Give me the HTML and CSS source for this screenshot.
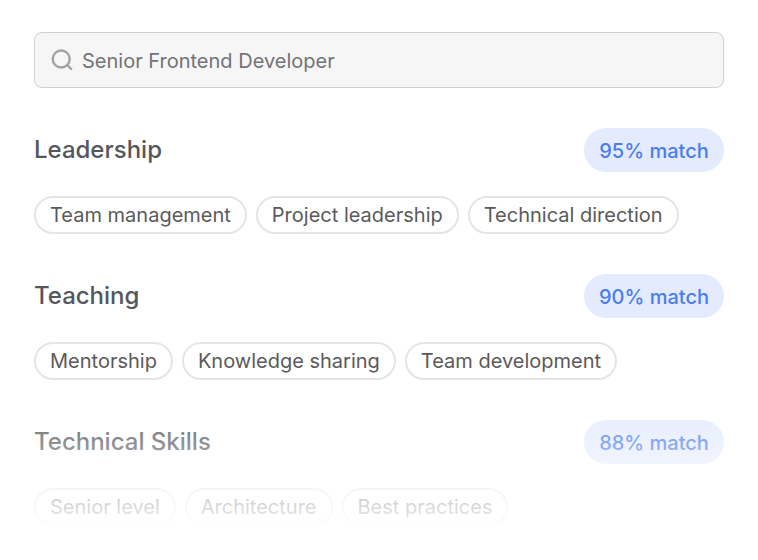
FILE: index.html
```html
<!DOCTYPE html>
<html lang="en">
<head>
<meta charset="utf-8">
<meta name="viewport" content="width=device-width, initial-scale=1">
<title>Skill match</title>
<link rel="stylesheet" href="styles.css">
</head>
<body>
<main class="panel">
  <label class="search">
    <svg class="search-icon" viewBox="0 0 24 24" aria-hidden="true"><circle cx="11.2" cy="11" r="8.5"/><path d="M17.4 17.2 21.2 21"/></svg>
    <input class="search-input" type="text" aria-label="Role" value="Senior Frontend Developer">
  </label>
  <section class="skill">
    <header class="skill-head"><h2 class="skill-title">Leadership</h2><span class="match">95% match</span></header>
    <ul class="tags"><li class="tag">Team management</li><li class="tag">Project leadership</li><li class="tag">Technical direction</li></ul>
  </section>
  <section class="skill">
    <header class="skill-head"><h2 class="skill-title">Teaching</h2><span class="match">90% match</span></header>
    <ul class="tags"><li class="tag">Mentorship</li><li class="tag">Knowledge sharing</li><li class="tag">Team development</li></ul>
  </section>
  <section class="skill">
    <header class="skill-head"><h2 class="skill-title">Technical Skills</h2><span class="match">88% match</span></header>
    <ul class="tags"><li class="tag">Senior level</li><li class="tag">Architecture</li><li class="tag">Best practices</li></ul>
  </section>
  <div class="fade"></div>
</main>
</body>
</html>
```
FILE: styles.css
```css
* { box-sizing: border-box; }
body { margin: 0; background: #fff; color: #55575c; font-family: Inter, "Liberation Sans", sans-serif; }
.panel { position: relative; padding: 32px 34px; display: flex; flex-direction: column; gap: 40px; }
.search { display: flex; align-items: center; gap: 8px; height: 56px; padding: 0 15px; border: 1px solid #d0d0d0; border-radius: 8px; background: #f6f6f6; }
.search-icon { width: 24px; height: 24px; flex: none; fill: none; stroke: #a3a3a3; stroke-width: 2.4; stroke-linecap: round; }
.search-input { flex: 1; min-width: 0; padding: 2px 0 0; border: 0; outline: 0; background: none; color: #737378; font: 400 20px/28px Inter, "Liberation Sans", sans-serif; }
.skill { display: flex; flex-direction: column; gap: 24px; }
.skill-head { display: flex; align-items: center; justify-content: space-between; height: 44px; }
.skill-title { margin: 0; font-size: 24px; line-height: 32px; font-weight: 500; }
.match { min-width: 140px; padding: 9px 15px 7px; border-radius: 22px; background: #e4ebff; color: #4a7df2; font-size: 20px; line-height: 28px; font-weight: 500; text-align: center; }
.tags { display: flex; flex-wrap: wrap; gap: 9px; margin: 0; padding: 0; list-style: none; }
.tag { padding: 3px 14px; border: 2px solid #e5e5e5; border-radius: 19px; color: #5a5a5a; font-size: 20px; line-height: 28px; }
.fade { position: absolute; left: 0; right: 0; bottom: 0; height: 166px; background: linear-gradient(rgba(255,255,255,0), rgba(255,255,255,0.86) 77%, #fff 81%); pointer-events: none; }
```
